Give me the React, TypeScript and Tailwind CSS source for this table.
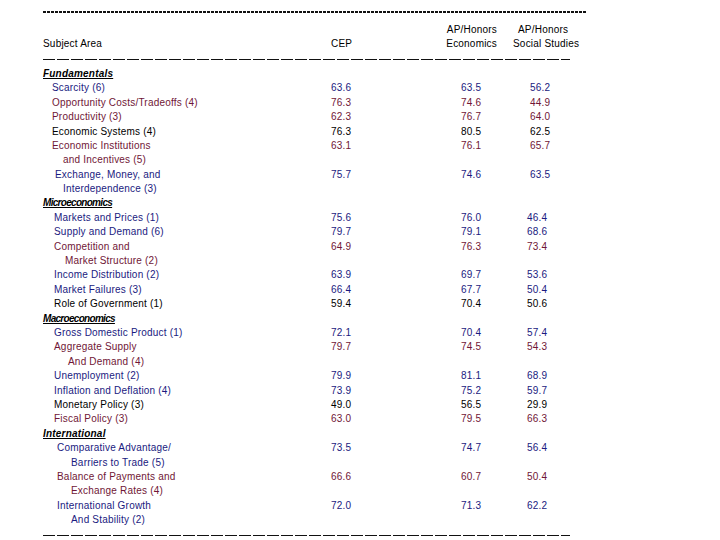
import React from "react";

const BLUE = "text-[#1a1a80]";
const MAROON = "text-[#701636]";
const BLACK = "text-black";

type Row =
  | { kind: "section"; text: string; tight?: boolean }
  | {
      kind: "item";
      text: string;
      indent: string;
      color: string;
      vals?: [string, string, string];
      socialShift?: boolean;
    };

const rows: Row[] = [
  { kind: "section", text: "Fundamentals" },
  { kind: "item", text: "Scarcity (6)", indent: "pl-[9px]", color: BLUE, vals: ["63.6", "63.5", "56.2"], socialShift: true },
  { kind: "item", text: "Opportunity Costs/Tradeoffs (4)", indent: "pl-[9px]", color: MAROON, vals: ["76.3", "74.6", "44.9"], socialShift: true },
  { kind: "item", text: "Productivity (3)", indent: "pl-[9px]", color: MAROON, vals: ["62.3", "76.7", "64.0"], socialShift: true },
  { kind: "item", text: "Economic Systems (4)", indent: "pl-[9px]", color: BLACK, vals: ["76.3", "80.5", "62.5"], socialShift: true },
  { kind: "item", text: "Economic Institutions", indent: "pl-[9px]", color: MAROON, vals: ["63.1", "76.1", "65.7"], socialShift: true },
  { kind: "item", text: "and Incentives (5)", indent: "pl-[20px]", color: MAROON },
  { kind: "item", text: "Exchange, Money, and", indent: "pl-[12px]", color: BLUE, vals: ["75.7", "74.6", "63.5"], socialShift: true },
  { kind: "item", text: "Interdependence (3)", indent: "pl-[20px]", color: BLUE },
  { kind: "section", text: "Microeconomics", tight: true },
  { kind: "item", text: "Markets and Prices (1)", indent: "pl-[11px]", color: BLUE, vals: ["75.6", "76.0", "46.4"] },
  { kind: "item", text: "Supply and Demand (6)", indent: "pl-[11px]", color: BLUE, vals: ["79.7", "79.1", "68.6"] },
  { kind: "item", text: "Competition and", indent: "pl-[11px]", color: MAROON, vals: ["64.9", "76.3", "73.4"] },
  { kind: "item", text: "Market Structure (2)", indent: "pl-[22px]", color: MAROON },
  { kind: "item", text: "Income Distribution (2)", indent: "pl-[11px]", color: BLUE, vals: ["63.9", "69.7", "53.6"] },
  { kind: "item", text: "Market Failures (3)", indent: "pl-[11px]", color: BLUE, vals: ["66.4", "67.7", "50.4"] },
  { kind: "item", text: "Role of Government (1)", indent: "pl-[11px]", color: BLACK, vals: ["59.4", "70.4", "50.6"] },
  { kind: "section", text: "Macroeconomics", tight: true },
  { kind: "item", text: "Gross Domestic Product (1)", indent: "pl-[11px]", color: BLUE, vals: ["72.1", "70.4", "57.4"] },
  { kind: "item", text: "Aggregate Supply", indent: "pl-[11px]", color: MAROON, vals: ["79.7", "74.5", "54.3"] },
  { kind: "item", text: "And Demand (4)", indent: "pl-[25px]", color: MAROON },
  { kind: "item", text: "Unemployment (2)", indent: "pl-[11px]", color: BLUE, vals: ["79.9", "81.1", "68.9"] },
  { kind: "item", text: "Inflation and Deflation (4)", indent: "pl-[11px]", color: BLUE, vals: ["73.9", "75.2", "59.7"] },
  { kind: "item", text: "Monetary Policy (3)", indent: "pl-[11px]", color: BLACK, vals: ["49.0", "56.5", "29.9"] },
  { kind: "item", text: "Fiscal Policy (3)", indent: "pl-[11px]", color: MAROON, vals: ["63.0", "79.5", "66.3"] },
  { kind: "section", text: "International" },
  { kind: "item", text: "Comparative Advantage/", indent: "pl-[14px]", color: BLUE, vals: ["73.5", "74.7", "56.4"] },
  { kind: "item", text: "Barriers to Trade (5)", indent: "pl-[28px]", color: BLUE },
  { kind: "item", text: "Balance of Payments and", indent: "pl-[14px]", color: MAROON, vals: ["66.6", "60.7", "50.4"] },
  { kind: "item", text: "Exchange Rates (4)", indent: "pl-[28px]", color: MAROON },
  { kind: "item", text: "International Growth", indent: "pl-[14px]", color: BLUE, vals: ["72.0", "71.3", "62.2"] },
  { kind: "item", text: "And Stability (2)", indent: "pl-[28px]", color: BLUE },
];

function LongDash() {
  return (
    <div className="h-[1px] w-[527px] bg-[repeating-linear-gradient(90deg,#111_0px,#111_12px,transparent_12px,transparent_14px)]" />
  );
}

export default function App() {
  return (
    <div className="w-[720px] h-[540px] bg-white overflow-hidden pl-[43px] pt-[11px] font-['Liberation_Sans',Arial,sans-serif] text-[10px] tracking-[0.2px] text-black">
      <div className="h-[2px] w-[544px] bg-[repeating-linear-gradient(90deg,#111_0px,#111_3px,transparent_3px,transparent_4px)]" />

      <div className="mt-[10px] flex">
        <div className="w-[288px] flex flex-col">
          <div className="h-[14.4px]" />
          <div className="h-[14.4px] leading-[14.4px]">Subject Area</div>
        </div>
        <div className="w-[112px] flex flex-col">
          <div className="h-[14.4px]" />
          <div className="h-[14.4px] leading-[14.4px]">CEP</div>
        </div>
        <div className="w-[54px] flex flex-col items-end">
          <div className="h-[14.4px] leading-[14.4px]">AP/Honors</div>
          <div className="h-[14.4px] leading-[14.4px]">Economics</div>
        </div>
        <div className="ml-[16px] flex flex-col">
          <div className="h-[14.4px] leading-[14.4px] pl-[5px]">AP/Honors</div>
          <div className="h-[14.4px] leading-[14.4px]">Social Studies</div>
        </div>
      </div>

      <div className="mt-[7.4px]">
        <LongDash />
      </div>

      <div className="mt-[6.8px] flex flex-col">
        {rows.map((r, i) =>
          r.kind === "section" ? (
            <div
              key={i}
              className={`h-[14.4px] leading-[14.4px] font-bold italic underline underline-offset-[1px] ${r.tight ? "tracking-[-0.7px]" : ""}`}
            >
              {r.text}
            </div>
          ) : (
            <div key={i} className={`h-[14.4px] leading-[14.4px] flex ${r.color}`}>
              <div className={`w-[288px] whitespace-nowrap ${r.indent}`}>{r.text}</div>
              {r.vals ? (
                <>
                  <div className="w-[130px]">{r.vals[0]}</div>
                  <div className={r.socialShift ? "w-[69px]" : "w-[66px]"}>{r.vals[1]}</div>
                  <div>{r.vals[2]}</div>
                </>
              ) : null}
            </div>
          )
        )}
      </div>

      <div className="mt-[7.4px]">
        <LongDash />
      </div>
    </div>
  );
}
